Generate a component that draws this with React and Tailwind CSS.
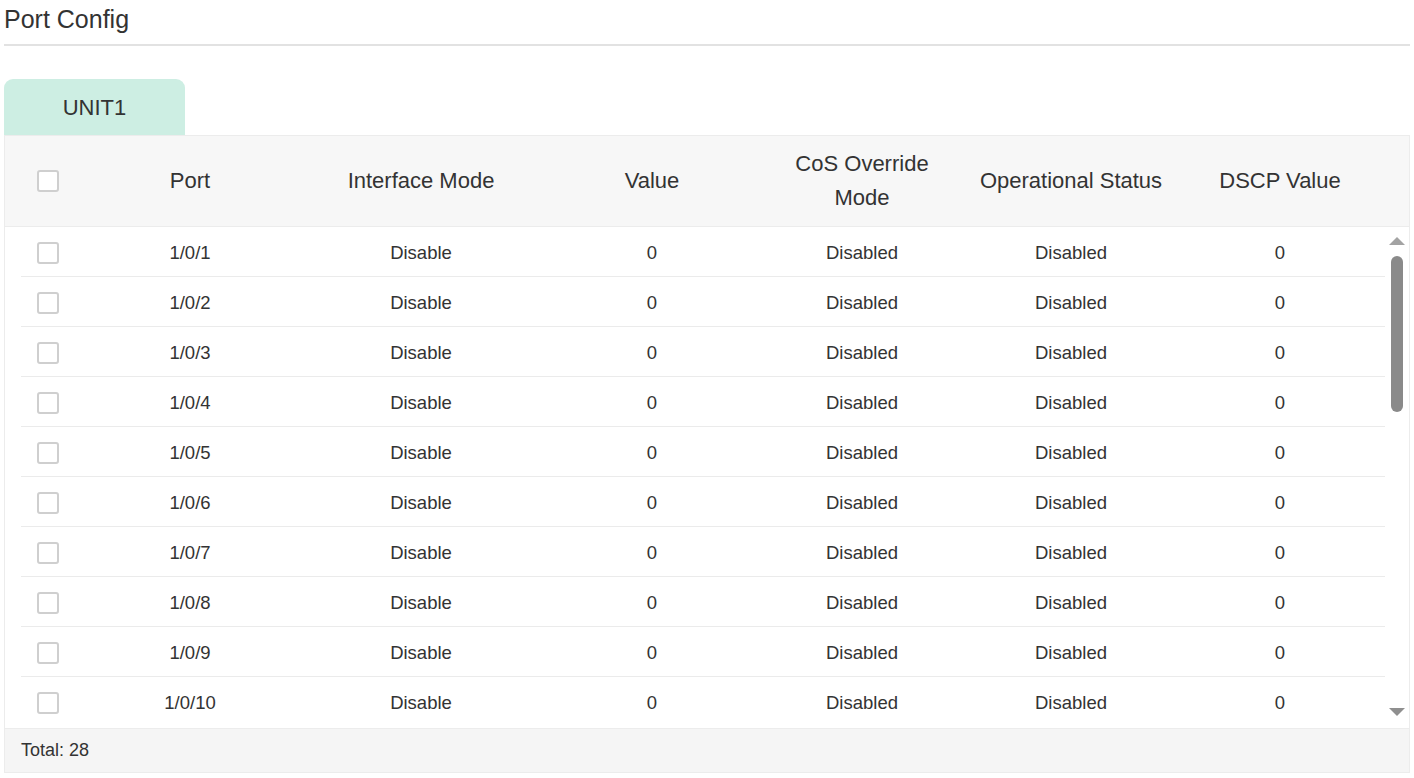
import React from 'react'

const rows = Array.from({ length: 10 }, (_, i) => ({
  port: `1/0/${i + 1}`,
  mode: 'Disable',
  value: '0',
  cos: 'Disabled',
  status: 'Disabled',
  dscp: '0',
}))

const cols = 'grid grid-cols-[54px_230px_232px_230px_190px_228px_190px]'

function Checkbox() {
  return <span className="block w-[22px] h-[22px] border-2 border-[#cfcfcf] rounded-[3px] bg-white" />
}

export default function App() {
  return (
    <div className="w-[1414px] h-[778px] bg-white px-1 text-[#333] font-['Liberation_Sans',Arial,sans-serif] overflow-hidden">
      {/* Title */}
      <div className="h-[46px] border-b-2 border-[#e2e2e2] flex items-start">
        <h1 className="text-[25px] leading-[38px] font-normal">Port Config</h1>
      </div>

      {/* Tabs */}
      <div className="mt-[33px] flex">
        <div className="w-[181px] h-[56px] bg-[#cdeee3] rounded-t-[9px] flex items-center justify-center text-[22px]">
          UNIT1
        </div>
      </div>

      {/* Table */}
      <div className="border border-[#ececec]">
        <div className={`${cols} h-[91px] bg-[#f7f7f7] border-b border-[#ececec] pl-4 items-center text-[22px] leading-[34px] text-center`}>
          <div className="flex justify-center"><Checkbox /></div>
          <div>Port</div>
          <div>Interface Mode</div>
          <div>Value</div>
          <div>CoS Override<br />Mode</div>
          <div>Operational Status</div>
          <div>DSCP Value</div>
        </div>

        <div className="flex h-[501px]">
          <div className="flex-1 pl-4">
            {rows.map((r) => (
              <div key={r.port} className={`${cols} h-[50px] pt-[2px] border-b border-[#ebebeb] last:border-b-0 items-center text-center text-[18.5px]`}>
                <div className="flex justify-center"><Checkbox /></div>
                <div>{r.port}</div>
                <div>{r.mode}</div>
                <div>{r.value}</div>
                <div>{r.cos}</div>
                <div>{r.status}</div>
                <div>{r.dscp}</div>
              </div>
            ))}
          </div>
          {/* scrollbar */}
          <div className="w-[24px] flex flex-col items-center pt-[10px] pb-[12px]">
            <span className="w-0 h-0 border-l-[8px] border-r-[8px] border-b-[8px] border-l-transparent border-r-transparent border-b-[#a3a3a3]" />
            <span className="mt-[11px] w-[12px] h-[156px] rounded-full bg-[#8a8a8a]" />
            <span className="flex-1" />
            <span className="w-0 h-0 border-l-[8px] border-r-[8px] border-t-[8px] border-l-transparent border-r-transparent border-t-[#8f8f8f]" />
          </div>
        </div>

        <div className="h-[44px] bg-[#f5f5f5] border-t border-[#ececec] flex items-center pl-4 text-[18px]">
          Total: 28
        </div>
      </div>
    </div>
  )
}
